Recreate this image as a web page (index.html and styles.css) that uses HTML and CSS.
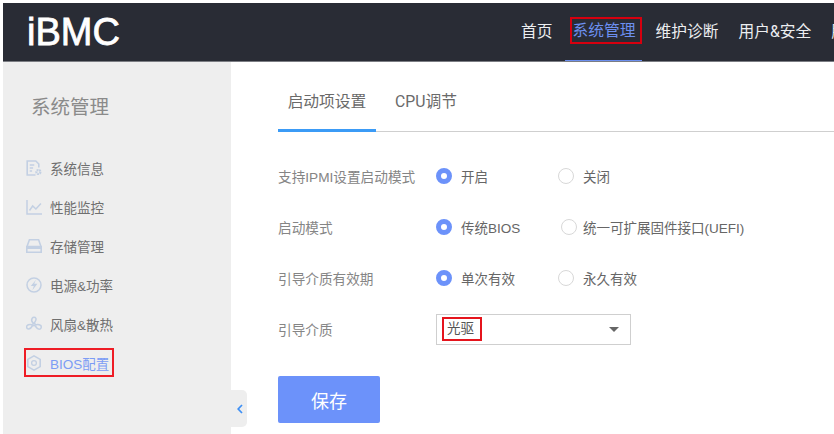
FILE: index.html
```html
<!DOCTYPE html>
<html lang="zh-CN">
<head>
<meta charset="utf-8">
<title>iBMC</title>
<link rel="stylesheet" href="styles.css">
</head>
<body>
<header class="topbar">
  <div class="logo">iBMC</div>
  <nav class="topnav">
    <a class="topnav-item">首页</a>
    <a class="topnav-item is-active"><span class="mark">系统管理</span></a>
    <a class="topnav-item">维护诊断</a>
    <a class="topnav-item">用户&amp;安全</a>
    <a class="topnav-item">服务管理</a>
  </nav>
</header>
<div class="layout">
  <aside class="sidebar">
    <h2 class="side-title">系统管理</h2>
    <ul class="side-menu">
      <li class="side-item">
        <svg class="side-icon" viewBox="0 0 16 16" fill="none" stroke="#c3d0e3" stroke-width="1.6"><path d="M9.5 15H1.2V1h8.6l3 3v3.5"/><path d="M3.7 5h4.6M3.7 8h3.4M3.7 11h2.4" stroke-width="1.3"/><circle cx="12.4" cy="12" r="2" stroke-width="2.2" stroke-dasharray="1.7 .6"/></svg>
        <span>系统信息</span>
      </li>
      <li class="side-item">
        <svg class="side-icon" viewBox="0 0 16 16" fill="none" stroke="#c3d0e3" stroke-width="1.5"><path d="M1 1v14h15"/><path d="M3.5 11.5l3.2-4.5 3.2 3 5-5.5"/></svg>
        <span>性能监控</span>
      </li>
      <li class="side-item">
        <svg class="side-icon" viewBox="0 0 16 16" fill="none" stroke="#c3d0e3" stroke-width="1.6"><path d="M1.2 8l2.2-6.2h9.2L14.8 8"/><path d="M.8 8.5h14.4v5.7H.8z"/><path d="M1 8.5h14V11H1z" fill="#c3d0e3" stroke="none"/></svg>
        <span>存储管理</span>
      </li>
      <li class="side-item">
        <svg class="side-icon" viewBox="0 0 16 16" fill="none" stroke="#c3d0e3" stroke-width="1.5"><circle cx="8" cy="8" r="7"/><path d="M10 2.8L4.8 9h3l-1.400 4.200 5-6.400H8.200z" fill="#c3d0e3" stroke="none"/></svg>
        <span>电源&amp;功率</span>
      </li>
      <li class="side-item">
        <svg class="side-icon" viewBox="0 0 16 16" fill="none" stroke="#c3d0e3" stroke-width="1.5"><circle cx="8" cy="8.5" r="1.2"/><path d="M7.2 7.3C5.600 5.600 5.400 3.400 6.200 2.200c.9-1.200 3-1.100 3.700.1.600 1.200-.3 2.900-1.700 4.800"/><path d="M6.800 9.200C5.500 11.800 3.400 13.200 1.900 12.900.6 12.500.2 10.700 1 9.700c.8-1 3-1.400 5-1"/><path d="M9.200 9c2-.8 4-.6 5.400.4 1 1 .8 2.800-.2 3.400-1.200.7-3.400-.1-5.200-2.800"/></svg>
        <span>风扇&amp;散热</span>
      </li>
      <li class="side-item is-active">
        <svg class="side-icon" viewBox="0 0 16 16" fill="none" stroke="#c3d0e3" stroke-width="1.6"><path d="M8 .9l6.200 3.500v7.200L8 15.100l-6.200-3.500V4.400z"/><circle cx="8" cy="8" r="2.4" stroke-width="1.3"/></svg>
        <span>BIOS配置</span>
      </li>
    </ul>
    <button class="collapse" aria-label="收起">
      <svg viewBox="0 0 6 10" width="6" height="10" fill="none" stroke="#3d8ff5" stroke-width="1.7"><path d="M5 1L1.2 5 5 9"/></svg>
    </button>
  </aside>
  <main class="content">
    <div class="tabs">
      <a class="tab is-active">启动项设置</a>
      <a class="tab">CPU调节</a>
    </div>
    <form class="form">
      <div class="row">
        <label class="row-label">支持IPMI设置启动模式</label>
        <div class="radio-one"><span class="radio on"></span><span class="radio-text">开启</span></div>
        <div class="radio-two"><span class="radio"></span><span class="radio-text">关闭</span></div>
      </div>
      <div class="row">
        <label class="row-label">启动模式</label>
        <div class="radio-one"><span class="radio on"></span><span class="radio-text">传统BIOS</span></div>
        <div class="radio-two shifted"><span class="radio"></span><span class="radio-text">统一可扩展固件接口(UEFI)</span></div>
      </div>
      <div class="row">
        <label class="row-label">引导介质有效期</label>
        <div class="radio-one"><span class="radio on"></span><span class="radio-text">单次有效</span></div>
        <div class="radio-two"><span class="radio"></span><span class="radio-text">永久有效</span></div>
      </div>
      <div class="row">
        <label class="row-label">引导介质</label>
        <div class="select"><span class="select-value">光驱</span><span class="caret"></span></div>
      </div>
      <button class="save" type="button">保存</button>
    </form>
  </main>
</div>
</body>
</html>
```

FILE: styles.css
```css
* { box-sizing: border-box; }
html, body { height: 100%; }
body {
  margin: 0;
  padding: 3px 0 0 3px;
  background: #fff;
  overflow: hidden;
  font-family: "Liberation Sans", "Noto Sans CJK SC", sans-serif;
  color: #6a6a6a;
}
.topbar {
  display: flex;
  align-items: center;
  height: 59px;
  background: #292c35;
  border-bottom: 1px solid #7b7d83;
  overflow: hidden;
  font-family: Roboto, "Noto Sans CJK SC", sans-serif;
}
.logo {
  flex: none;
  width: 93px;
  margin-left: 24px;
  color: #fff;
  font-family: "Liberation Sans", sans-serif;
  font-size: 38px;
  -webkit-text-stroke: .8px #fff;
}
.topnav {
  display: flex;
  flex: none;
  height: 100%;
  margin-left: 391px;
}
.topnav-item {
  display: flex;
  align-items: center;
  position: relative;
  padding: 0 10px 4px;
  color: #eceef0;
  font-size: 15.75px;
  white-space: nowrap;
}
.topnav-item.is-active {
  margin: 0 4px 0 2px;
  padding: 0 0 4px 5px;
  color: #6c8ff0;
}
.topnav-item.is-active::after {
  content: "";
  position: absolute;
  left: 0;
  right: 0;
  bottom: -1px;
  height: 2px;
  background: #6c8ff0;
}
.mark {
  padding: 0 6px 0 3px;
  line-height: 27px;
  outline: 2px solid #d6000f;
  outline-offset: -2px;
}
.layout {
  display: flex;
  height: 372px;
}
.sidebar {
  position: relative;
  flex: none;
  width: 228px;
  background: #eeeeee;
}
.side-title {
  margin: 32px 0 0 28px;
  font-size: 19.5px;
  line-height: 26px;
  font-weight: 400;
  color: #8a8a8a;
}
.side-menu {
  list-style: none;
  margin: 28px 0 0;
  padding: 0;
}
.side-item {
  position: relative;
  display: flex;
  align-items: center;
  gap: 8px;
  height: 39px;
  padding-left: 23px;
  font-size: 13.5px;
  color: #6f6f6f;
}
.side-icon { width: 16px; height: 16px; flex: none; }
.side-item.is-active { color: #7c9cf5; }
.side-item.is-active::after {
  content: "";
  box-sizing: border-box;
  position: absolute;
  left: 21px;
  top: 5px;
  width: 90px;
  height: 29px;
  border: 2px solid #ee1c25;
}
.collapse {
  position: absolute;
  left: 228px;
  top: 328px;
  display: flex;
  align-items: center;
  justify-content: center;
  width: 16px;
  height: 37px;
  padding: 0 0 0 1px;
  border: 0;
  border-radius: 0 5px 5px 0;
  background: #eeeeee;
}
.content {
  flex: 1;
  min-width: 0;
  padding: 0 0 0 47px;
}
.tabs {
  display: flex;
  height: 70px;
  border-bottom: 1px solid #cfcfcf;
  padding-top: 25px;
  font-family: Roboto, "Noto Sans CJK SC", sans-serif;
}
.tab {
  display: flex;
  align-items: center;
  justify-content: center;
  flex: none;
  height: 45px;
  padding: 0 10px 19px;
  font-size: 15.75px;
  color: #6a6a6a;
  white-space: nowrap;
}
.tab.is-active {
  width: 98px;
  margin-right: 9px;
  padding: 0 0 16px;
  border-bottom: 3px solid #3b9bf6;
}
.form { padding-top: 18px; }
.row {
  display: flex;
  align-items: center;
  height: 51px;
  font-size: 13.5px;
}
.row-label { width: 158px; flex: none; color: #858585; font-size: 13.65px; white-space: nowrap; }
.radio-one, .radio-two {
  display: flex;
  align-items: center;
}
.radio-one { width: 122px; flex: none; }
.radio-two.shifted { margin-left: 3px; }
.radio {
  width: 16px;
  height: 16px;
  flex: none;
  margin-right: 9px;
  border: 1px solid #d8d8d8;
  border-radius: 50%;
}
.radio-two.shifted .radio { margin-right: 6px; }
.radio.on { border: 5px solid #6c92fa; background: #fff; }
.radio-text { color: #666; }
.select {
  display: flex;
  align-items: center;
  justify-content: space-between;
  width: 195px;
  height: 31px;
  margin-top: 1px;
  padding: 0 11px 0 7px;
  border: 1px solid #cfcfcf;
  color: #555;
  font-size: 13.5px;
}
.select-value {
  padding: 0 6px 0 3px;
  line-height: 20px;
  outline: 2px solid #e5141c;
}
.caret {
  width: 0;
  height: 0;
  border-left: 5px solid transparent;
  border-right: 5px solid transparent;
  border-top: 5px solid #666;
}
.save {
  display: block;
  width: 102px;
  height: 47px;
  margin-top: 22px;
  padding: 0;
  border: 0;
  border-radius: 2px;
  background: #6c92fa;
  color: #fff;
  font: inherit;
  font-size: 18px;
}
```
